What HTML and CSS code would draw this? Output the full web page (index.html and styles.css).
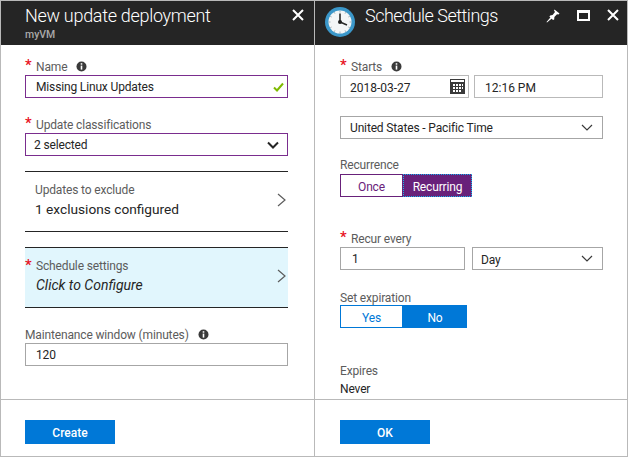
FILE: index.html
```html
<!DOCTYPE html>
<html lang="en">

<head>
    <meta charset="UTF-8">
    <title>Update deployment</title>
    <link rel="stylesheet" href="styles.css">
</head>

<body>
    <div class="blades">
        <section class="blade blade-left">
            <header class="blade-header">
                <div class="titles">
                    <h1>New update deployment</h1>
                    <p class="subtitle">myVM</p>
                </div>
                <div class="actions">
                    <svg class="icon-close" width="12" height="12" viewBox="0 0 12 12"><path d="M1 1L11 11M11 1L1 11" /></svg>
                </div>
            </header>
            <div class="blade-body">
                <label class="field-label name-label"><span class="star">*</span>Name
                    <svg class="info" width="11" height="11" viewBox="0 0 11 11"><circle cx="5.5" cy="5.5" r="5" /><rect x="4.7" y="4.6" width="1.6" height="4" /><rect x="4.7" y="2.2" width="1.6" height="1.5" /></svg>
                </label>
                <div class="input input-active">
                    <span>Missing Linux Updates</span>
                    <svg width="11" height="10" viewBox="0 0 11 10"><path d="M1 5.5L4 8.5L10 1.5" fill="none" stroke="#7fba00" stroke-width="2" /></svg>
                </div>

                <label class="field-label class-label"><span class="star">*</span>Update classifications</label>
                <div class="input input-active input-select">
                    <span>2 selected</span>
                    <svg width="12" height="8" viewBox="0 0 12 8"><path d="M1 1.5L6 6.5L11 1.5" fill="none" stroke="#252525" stroke-width="2" /></svg>
                </div>

                <div class="nav-row exclude-row">
                    <div>
                        <p class="nav-label">Updates to exclude</p>
                        <p class="nav-value">1 exclusions configured</p>
                    </div>
                    <svg class="chevron" width="9" height="14" viewBox="0 0 9 14"><path d="M1 1L8 7L1 13" /></svg>
                </div>

                <div class="nav-row schedule-row">
                    <span class="star star-row">*</span>
                    <div>
                        <p class="nav-label">Schedule settings</p>
                        <p class="nav-value nav-italic">Click to Configure</p>
                    </div>
                    <svg class="chevron" width="9" height="14" viewBox="0 0 9 14"><path d="M1 1L8 7L1 13" /></svg>
                </div>

                <label class="field-label window-label">Maintenance window (minutes)
                    <svg class="info" width="11" height="11" viewBox="0 0 11 11"><circle cx="5.5" cy="5.5" r="5" /><rect x="4.7" y="4.6" width="1.6" height="4" /><rect x="4.7" y="2.2" width="1.6" height="1.5" /></svg>
                </label>
                <div class="input"><span>120</span></div>
            </div>
            <footer class="blade-footer">
                <button class="primary">Create</button>
            </footer>
        </section>

        <section class="blade blade-right">
            <header class="blade-header">
                <svg class="clock" width="30" height="30" viewBox="0 0 30 30">
                    <circle cx="15" cy="15" r="15" fill="#3b97c9" />
                    <circle cx="15" cy="15" r="11.5" fill="#f4f6f7" />
                    <path d="M15 3.5v2M15 24.5v2M3.5 15h2M24.5 15h2M9 5l1 1.7M21 5l-1 1.7M5 9l1.7 1M25 9l-1.7 1M5 21l1.7-1M25 21l-1.7-1M9 25l1-1.7M21 25l-1-1.7" stroke="#a9b4ba" stroke-width="1" />
                    <path d="M15 6.5V15L22 18" fill="none" stroke="#2a2a2a" stroke-width="1.6" />
                    <circle cx="15" cy="15" r="2" fill="#1f1f1f" />
                </svg>
                <div class="titles">
                    <h1>Schedule Settings</h1>
                </div>
                <div class="actions">
                    <svg width="14" height="14" viewBox="0 0 14 14"><path d="M8.5 0.5L13.5 4.5L12.5 5.5L11 5.2L8.4 8L8.2 10.6L7 11L3.4 7.4L4.2 6.4L6.6 6L9 3L8 1.5ZM4.6 8.2L5.8 9.4L1 13.5L0.5 13Z" fill="#fff" /></svg>
                    <svg class="icon-max" width="13" height="11" viewBox="0 0 13 11"><rect x="0" y="0" width="13" height="11" fill="#fff" /><rect x="2" y="3" width="9" height="6" fill="#252525" /></svg>
                    <svg class="icon-close" width="12" height="12" viewBox="0 0 12 12"><path d="M1 1L11 11M11 1L1 11" /></svg>
                </div>
            </header>
            <div class="blade-body">
                <label class="field-label name-label"><span class="star">*</span>Starts
                    <svg class="info" width="11" height="11" viewBox="0 0 11 11"><circle cx="5.5" cy="5.5" r="5" /><rect x="4.7" y="4.6" width="1.6" height="4" /><rect x="4.7" y="2.2" width="1.6" height="1.5" /></svg>
                </label>
                <div class="input-pair">
                    <div class="input input-date">
                        <span>2018-03-27</span>
                        <svg width="15" height="15" viewBox="0 0 15 15">
                            <rect width="15" height="15" fill="#3a3a3a" />
                            <rect x="1" y="1" width="13" height="2" fill="#fff" />
                            <path d="M3 5h2v2H3zM6 5h2v2H6zM9 5h2v2H9zM12 5h1v2h-1zM3 8h2v2H3zM6 8h2v2H6zM9 8h2v2H9zM12 8h1v2h-1zM3 11h2v2H3zM6 11h2v2H6zM9 11h2v2H9z" fill="#fff" />
                        </svg>
                    </div>
                    <div class="input input-time"><span>12:16 PM</span></div>
                </div>

                <div class="input input-zone">
                    <span>United States - Pacific Time</span>
                    <svg class="select-arrow" width="12" height="7" viewBox="0 0 12 7"><path d="M1 1L6 6L11 1" /></svg>
                </div>

                <label class="field-label recurrence-label">Recurrence</label>
                <div class="toggle toggle-purple">
                    <span class="toggle-off once">Once</span>
                    <span class="toggle-on recurring">Recurring</span>
                </div>

                <label class="field-label recur-label"><span class="star">*</span>Recur every</label>
                <div class="input-pair input-pair-recur">
                    <div class="input input-num"><span>1</span></div>
                    <div class="input input-unit">
                        <span>Day</span>
                        <svg class="select-arrow" width="12" height="7" viewBox="0 0 12 7"><path d="M1 1L6 6L11 1" /></svg>
                    </div>
                </div>

                <label class="field-label expiry-label">Set expiration</label>
                <div class="toggle toggle-blue">
                    <span class="toggle-off yes">Yes</span>
                    <span class="toggle-on no">No</span>
                </div>

                <p class="expires-label">Expires</p>
                <p class="expires-value">Never</p>
            </div>
            <footer class="blade-footer">
                <button class="primary">OK</button>
            </footer>
        </section>
    </div>
</body>

</html>
```

FILE: styles.css
```css
* {
    box-sizing: border-box;
}

html,
body {
    margin: 0;
    padding: 0;
    background-color: #fff;
}

body {
    font-family: Roboto, "Open Sans", sans-serif;
    font-size: 12px;
    letter-spacing: -0.15px;
    color: #252525;
    overflow: hidden;
}

p,
h1 {
    margin: 0;
}

.blades {
    display: flex;
    width: 628px;
    height: 457px;
    border-top: 1px solid #b9b9b9;
    border-bottom: 1px solid #b9b9b9;
}

.blade {
    display: flex;
    flex-direction: column;
    border-left: 1px solid #b9b9b9;
}

.blade-left {
    width: 314px;
}

.blade-right {
    width: 314px;
    border-right: 1px solid #b9b9b9;
}

/* Header */
.blade-header {
    display: flex;
    flex: none;
    height: 44px;
    background-color: #252525;
    color: #fff;
}

.blade-left .blade-header {
    padding-left: 24px;
}

.blade-right .blade-header {
    padding-left: 10px;
}

.clock {
    margin: 6px 10px 0 0;
}

.titles h1 {
    font-size: 18px;
    font-weight: 300;
    line-height: 30px;
    letter-spacing: -0.3px;
}

.blade-right .titles h1 {
    letter-spacing: -0.5px;
}

.subtitle {
    font-size: 10.5px;
    font-weight: 500;
    line-height: 12px;
    letter-spacing: 0;
    margin-top: -2px;
    color: #a9a9a9;
}

.actions {
    display: flex;
    align-items: flex-start;
    gap: 17px;
    margin-left: auto;
    padding: 8px 8px 0 0;
}

.blade-left .actions {
    padding-right: 10px;
}

.icon-close path {
    fill: none;
    stroke: #fff;
    stroke-width: 2;
}

.icon-max {
    margin-top: 1px;
}

/* Body */
.blade-body {
    flex: 1;
    padding: 0 26px 0 24px;
    overflow: hidden;
}

.blade-right .blade-body {
    padding: 0 24px 0 25px;
}

.field-label {
    display: block;
    height: 18px;
    padding-top: 1px;
    line-height: 18px;
    color: #5c5c5c;
}

.star {
    display: inline-block;
    width: 11px;
    color: #e81123;
    font-size: 15px;
    font-weight: 500;
    line-height: 0;
    vertical-align: 1px;
}

.info {
    margin-left: 6px;
    vertical-align: -1px;
}

.info circle {
    fill: #3a3a3a;
}

.info rect {
    fill: #fff;
}

.name-label {
    margin-top: 12px;
}

.class-label {
    margin-top: 17px;
}

.window-label {
    margin-top: 17px;
}

.input {
    display: flex;
    align-items: center;
    justify-content: space-between;
    height: 23px;
    padding: 0 3px 0 10px;
    border: 1px solid #a6a6a6;
    color: #252525;
}

.input-active {
    border-color: #7a2d8e;
}

.input-select {
    padding: 0 8px 0 8px;
}

.input-pair {
    display: flex;
    gap: 5px;
}

.input-date,
.input-time {
    width: 129px;
    border-color: #b9b9b9;
    letter-spacing: 0;
}

.input-date {
    padding: 0 3px 0 9px;
}

.input-date span,
.input-time span {
    padding-top: 2px;
}

.input-zone {
    margin-top: 18px;
    padding: 0 9px;
}

.select-arrow path {
    fill: none;
    stroke: #3a3a3a;
    stroke-width: 1.2;
}

.input-pair-recur {
    gap: 7px;
}

.input-num {
    width: 125px;
    padding-left: 11px;
}

.input-unit {
    width: 131px;
    padding: 0 9px 0 8px;
}

.input-unit span {
    padding-top: 3px;
}

/* Nav rows */
.nav-row {
    position: relative;
    display: flex;
    align-items: center;
    justify-content: space-between;
    height: 61px;
    padding: 0 2px 4px 10px;
    border-top: 1px solid #252525;
    border-bottom: 1px solid #252525;
}

.exclude-row {
    margin-top: 15px;
}

.schedule-row {
    margin-top: 15px;
    padding-left: 11px;
    background-color: #e1f6fd;
}

.star-row {
    position: absolute;
    left: 0;
    top: 10px;
    line-height: 14px;
}

.nav-label {
    line-height: 18px;
    color: #5c5c5c;
}

.nav-value {
    font-size: 13.7px;
    line-height: 20px;
    letter-spacing: 0;
    color: #252525;
}

.nav-italic {
    font-size: 14px;
    font-style: italic;
}

.chevron path {
    fill: none;
    stroke: #5c5c5c;
    stroke-width: 1.2;
}

/* Toggles */
.toggle {
    display: flex;
    height: 23px;
}

.toggle span {
    display: flex;
    align-items: center;
    justify-content: center;
    padding-top: 2px;
    border: 1px solid;
}

.once,
.yes {
    width: 63px;
}

.recurring {
    width: 69px;
}

.no {
    width: 64px;
}

.toggle-purple .toggle-off {
    color: #68217a;
    border-color: #68217a;
}

.toggle-purple .toggle-on {
    color: #fff;
    background-color: #68217a;
    border: 1px dotted #10b4f0;
}

.toggle-blue .toggle-off {
    color: #0078d7;
    border-color: #0078d7;
}

.toggle-blue .toggle-on {
    color: #fff;
    background-color: #0078d7;
    border-color: #0078d7;
}

.recurrence-label {
    margin-top: 17px;
    padding-top: 0;
}

.recur-label {
    margin-top: 32px;
}

.expiry-label {
    margin-top: 17px;
    padding-top: 2px;
}

.expires-label {
    margin-top: 34px;
    line-height: 18px;
    color: #5c5c5c;
}

.expires-value {
    line-height: 18px;
}

/* Footer */
.blade-footer {
    flex: none;
    height: 57px;
    padding: 20px 24px 0;
    border-top: 1px solid #b9b9b9;
}

.blade-right .blade-footer {
    padding-left: 25px;
}

.primary {
    display: block;
    width: 90px;
    height: 24px;
    padding: 2px 0 0;
    border: none;
    background-color: #0078d7;
    color: #fff;
    font-family: inherit;
    font-size: 12px;
    font-weight: 500;
}
```
